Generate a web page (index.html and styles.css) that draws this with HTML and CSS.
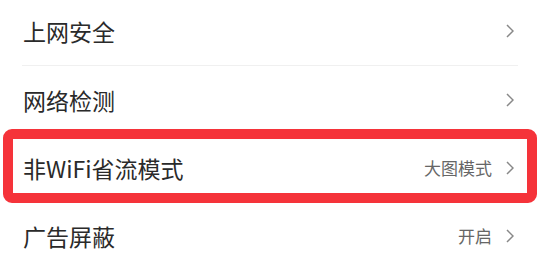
FILE: index.html
```html
<!DOCTYPE html>
<html>
<head>
    <title>设置</title>
    <link rel="stylesheet" href="styles.css">
</head>
<body>
    <div class="list">
        <div class="row first">
            <span class="label">上网安全</span>
            <span class="extra">
                <svg class="arrow" viewBox="0 0 8 14"><path d="M1 1l6 6-6 6"/></svg>
            </span>
        </div>
        <div class="row">
            <span class="label">网络检测</span>
            <span class="extra">
                <svg class="arrow" viewBox="0 0 8 14"><path d="M1 1l6 6-6 6"/></svg>
            </span>
        </div>
        <div class="row">
            <span class="label">非WiFi省流模式</span>
            <span class="extra">
                <span class="value">大图模式</span>
                <svg class="arrow" viewBox="0 0 8 14"><path d="M1 1l6 6-6 6"/></svg>
            </span>
        </div>
        <div class="row">
            <span class="label">广告屏蔽</span>
            <span class="extra">
                <span class="value">开启</span>
                <svg class="arrow" viewBox="0 0 8 14"><path d="M1 1l6 6-6 6"/></svg>
            </span>
        </div>
        <div class="highlight"></div>
    </div>
</body>
</html>
```
FILE: styles.css
```css
html, body {
    margin: 0;
    padding: 0;
    background: #fff;
    font-family: "Noto Sans CJK SC", "Noto Sans", sans-serif;
}

.list {
    position: relative;
    width: 540px;
    height: 259px;
    overflow: hidden;
}

.row {
    height: 67px;
    margin: 0 22px;
    display: flex;
    align-items: center;
    justify-content: space-between;
    border-bottom: 1px solid #f0f0f0;
}

.row.first {
    height: 62px;
    padding-bottom: 3px;
}

.label {
    padding-left: 1px;
    font-size: 23px;
    color: #2a2a2a;
}

.extra {
    display: flex;
    align-items: center;
    gap: 14px;
    padding-right: 4px;
}

.value {
    font-size: 17px;
    color: #666;
}

.arrow {
    width: 8px;
    height: 14px;
    fill: none;
    stroke: #888;
    stroke-width: 1.5;
}

.highlight {
    position: absolute;
    left: 3px;
    top: 129px;
    width: 514px;
    height: 54px;
    border: 10px solid #f5333a;
    border-radius: 9px;
}
```
